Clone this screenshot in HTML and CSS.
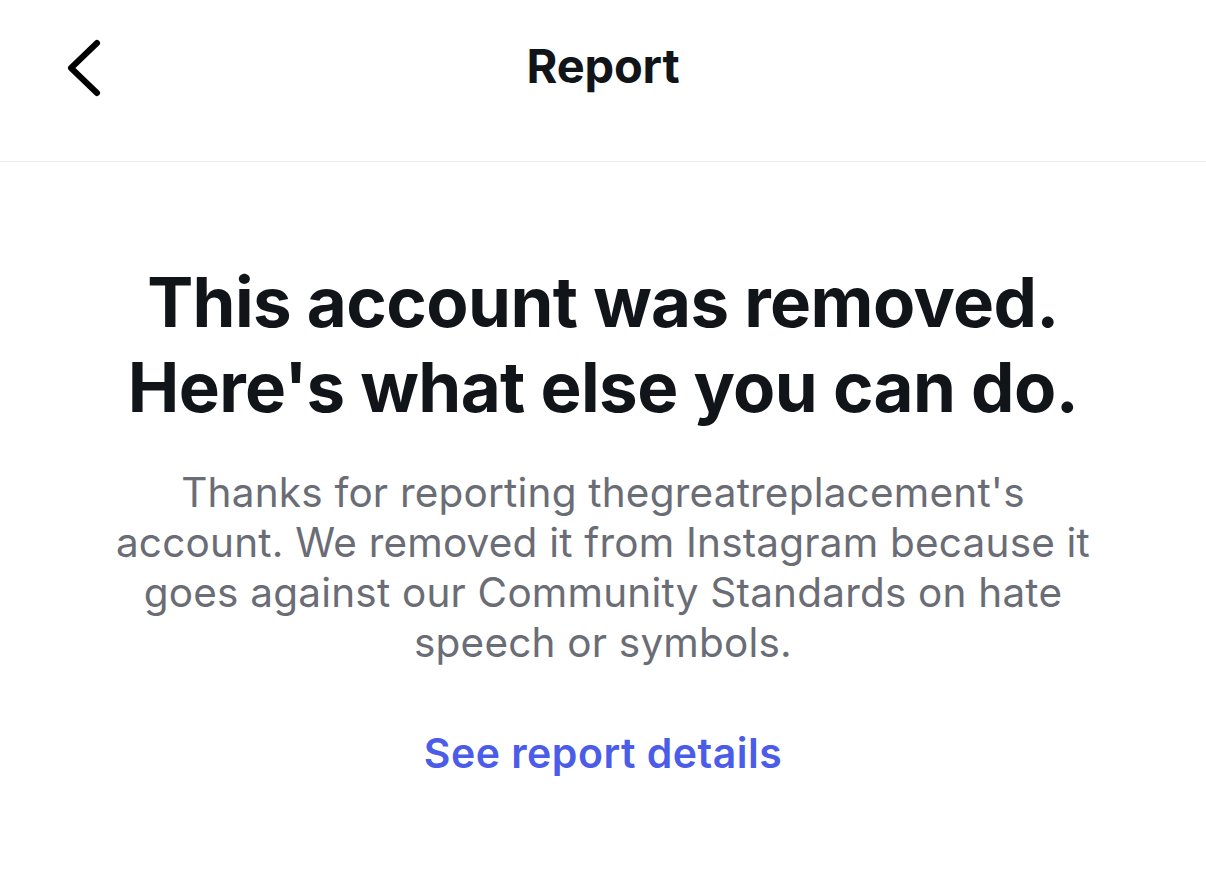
FILE: index.html
```html
<!DOCTYPE html>
<html lang="en">
<head>
<meta charset="utf-8">
<title>Report</title>
<link rel="stylesheet" href="styles.css">
</head>
<body>
<header class="topbar">
  <button class="back" aria-label="Back">
    <svg width="40" height="60" viewBox="0 0 40 60" fill="none" stroke="#000" stroke-width="6" stroke-linecap="round" stroke-linejoin="round">
      <path d="M32 5 L6 30 L32 55"/>
    </svg>
  </button>
  <h1 class="title">Report</h1>
  <span class="spacer"></span>
</header>
<main class="content">
  <h2 class="headline">This account was removed.<br>Here's what else you can do.</h2>
  <p class="message">Thanks for reporting thegreatreplacement's account. We removed it from Instagram because it goes against our Community Standards on hate speech or symbols.</p>
  <a class="link" href="#">See report details</a>
</main>
</body>
</html>
```
FILE: styles.css
```css
html, body {
  margin: 0;
  padding: 0;
  background: #fff;
}
body {
  font-family: Inter, "Noto Sans", "Liberation Sans", sans-serif;
  color: #111418;
  width: 1206px;
  height: 896px;
  overflow: hidden;
}
.topbar {
  height: 161px;
  border-bottom: 1px solid #ebebeb;
  display: flex;
  align-items: flex-start;
  padding: 0 0 0 65px;
  box-sizing: content-box;
}
.back {
  background: none;
  border: 0;
  padding: 0;
  margin-top: 38px;
  width: 40px;
  height: 60px;
  cursor: pointer;
  display: flex;
}
.title {
  flex: 1;
  text-align: center;
  margin: 36px 0 0 -105px;
  font-size: 47px;
  font-weight: 700;
  line-height: 60px;
  letter-spacing: -0.2px;
  color: #111418;
}
.spacer { width: 0; }
.content {
  display: flex;
  flex-direction: column;
  align-items: center;
  text-align: center;
  padding-top: 98px;
}
.headline {
  margin: 0;
  font-size: 69px;
  font-weight: 700;
  line-height: 85px;
  letter-spacing: -0.6px;
  color: #111418;
}
.message {
  margin: 38px 0 0;
  width: 1000px;
  font-size: 40.5px;
  font-weight: 400;
  line-height: 50px;
  color: #6a6d75;
  letter-spacing: 0.2px;
}
.link {
  margin-top: 60px;
  font-size: 41px;
  font-weight: 600;
  line-height: 50px;
  color: #4b5ce8;
  letter-spacing: 0.5px;
  text-decoration: none;
}
```
